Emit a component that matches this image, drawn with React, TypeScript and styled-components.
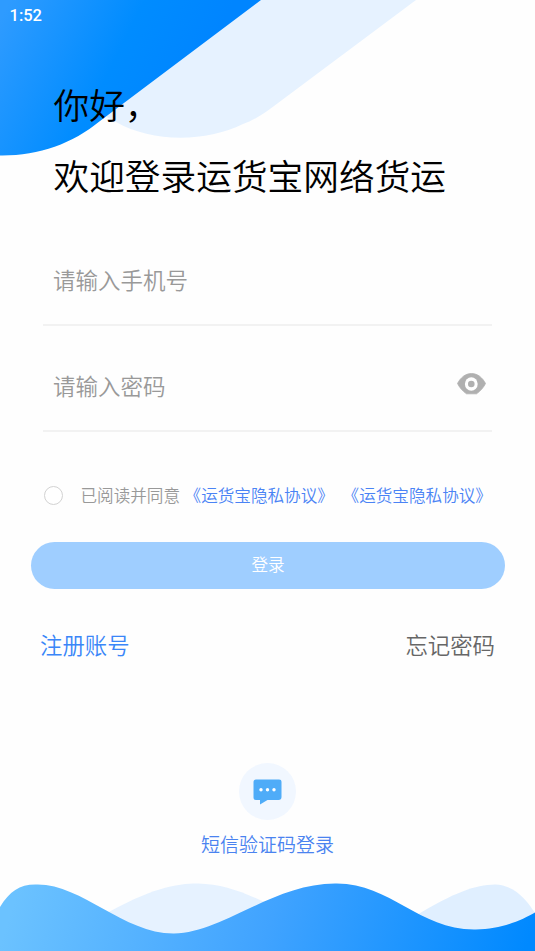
import React from "react";
import styled, { createGlobalStyle } from "styled-components";

const GlobalStyle = createGlobalStyle`
  * { box-sizing: border-box; }
  body {
    margin: 0;
    background: #fefefe;
    font-family: "Noto Sans CJK SC", sans-serif;
    font-weight: 350;
  }
`;

const Screen = styled.div`
  display: grid;
  grid-template-rows: 951px;
  grid-template-columns: 535px;
  width: 535px;
  height: 951px;
  overflow: hidden;
  background: #fefefe;
`;

const Wave = styled.svg<{ $edge: "start" | "end" }>`
  grid-area: 1 / 1;
  align-self: ${(p) => p.$edge};
  display: block;
`;

const Content = styled.main`
  grid-area: 1 / 1;
  z-index: 1;
  display: flex;
  flex-direction: column;
`;

const StatusBar = styled.div`
  height: 32px;
  padding: 0 9.5px;
  font: 500 16.5px/31px Roboto, sans-serif;
  color: #fff;
`;

const Greeting = styled.h1`
  margin: 36px 0 0 53.5px;
  font-size: 35.7px;
  font-weight: 350;
  line-height: 71px;
  color: #000;
  white-space: nowrap;
`;

const Field = styled.label<{ $height: number }>`
  display: flex;
  align-items: flex-end;
  justify-content: space-between;
  height: ${(p) => p.$height}px;
  margin: 0 43px;
  padding: 0 6.5px 28.5px 10px;
  border-bottom: 2px solid #f2f2f2;
`;

const Input = styled.input`
  width: 300px;
  height: 34px;
  padding: 0;
  border: 0;
  outline: 0;
  background: transparent;
  font: 350 22.5px/34px "Noto Sans CJK SC", sans-serif;
  color: #333;
  &::placeholder {
    color: #999;
    opacity: 1;
  }
`;

const EyeIcon = styled.svg`
  display: block;
  margin-bottom: 7px;
`;

const Agreement = styled.div`
  display: flex;
  align-items: center;
  height: 24px;
  margin: 51px 0 0 44px;
  font-size: 16.6px;
  line-height: 24px;
  color: #999;
  white-space: nowrap;
`;

const Radio = styled.span`
  width: 19px;
  height: 19px;
  margin-right: 17.5px;
  border: 1px solid #d2d2d2;
  border-radius: 50%;
  background: #fff;
`;

const Policy = styled.a<{ $gap: number }>`
  margin-left: ${(p) => p.$gap}px;
  color: #4a83f5;
`;

const LoginButton = styled.button`
  height: 47.5px;
  margin: 34.5px 30px 0 31px;
  padding: 0 0 3px;
  border: 0;
  border-radius: 24px;
  background: #9fceff;
  font: 350 16.6px/24px "Noto Sans CJK SC", sans-serif;
  color: #fff;
`;

const Links = styled.nav`
  display: flex;
  justify-content: space-between;
  margin: 38px 40px 0;
  font-size: 22.4px;
  line-height: 34px;
`;

const TextLink = styled.a<{ $color: string }>`
  color: ${(p) => p.$color};
`;

const SmsLogin = styled.a`
  display: flex;
  flex-direction: column;
  align-items: center;
  gap: 10px;
  margin-top: 102px;
  font-size: 19px;
  line-height: 28px;
  color: #4a83f0;
`;

const SmsBadge = styled.span`
  display: flex;
  align-items: center;
  justify-content: center;
  width: 57px;
  height: 57px;
  border-radius: 50%;
  background: #f1f7ff;
`;

const POLICY = "《运货宝隐私协议》";

export default function App() {
  return (
    <Screen>
      <GlobalStyle />
      <Wave $edge="start" width="535" height="160" viewBox="0 0 535 160">
        <defs>
          <linearGradient id="top" gradientUnits="userSpaceOnUse" x1="0" y1="20" x2="180" y2="110">
            <stop offset="0" stopColor="#2e9bff" />
            <stop offset="0.6" stopColor="#008cff" />
            <stop offset="1" stopColor="#0085ff" />
          </linearGradient>
        </defs>
        <path d="M416 0L274 106C262 115 252 121 243 124C205 142.500 152 142.500 116 122C70 98 45 55 36 0Z" fill="#e6f2ff" />
        <path d="M0 0H261L100 121C72 144 38 156 0 155.500Z" fill="url(#top)" />
      </Wave>
      <Wave $edge="end" width="535" height="71" viewBox="0 880 535 71">
        <defs>
          <linearGradient id="bottom" gradientUnits="userSpaceOnUse" x1="30" y1="850" x2="510" y2="1000">
            <stop offset="0" stopColor="#6bc2ff" />
            <stop offset="0.5" stopColor="#40a3ff" />
            <stop offset="1" stopColor="#0089ff" />
          </linearGradient>
        </defs>
        <path d="M100 917C150 888 176 883.500 198 883.500C225 884 248 894 275 907L230 951H100Z" fill="#e6f2ff" />
        <path d="M415 916C455 892 475 885 495 884.500C514 885 526 899 535 913V951H415Z" fill="#e0efff" />
        <path d="M0 907C10 891 20 884 37 884.500C82 884 124 934 174 933.500C222 933 274 883 336 883.500C390 883 419 929.500 474 929.500C500 930 522 920 535 912.500V951H0Z" fill="url(#bottom)" />
      </Wave>
      <Content>
        <StatusBar>1:52</StatusBar>
        <Greeting>
          你好，
          <br />
          欢迎登录运货宝网络货运
        </Greeting>
        <Field $height={116}>
          <Input type="tel" placeholder="请输入手机号" />
        </Field>
        <Field $height={106}>
          <Input type="password" placeholder="请输入密码" />
          <EyeIcon width="29" height="22" viewBox="0 0 29 22">
            <path d="M0.500 10.500C3 5.500 8 0.500 14.500 0.500S26 5.500 28.500 10.500C26.500 14.500 23.500 18 19.500 20.800H9.500C5.500 18 2.500 14.500 0.500 10.500Z" fill="#b0b0b0" stroke="#b0b0b0" strokeWidth="0.800" />
            <ellipse cx="14.300" cy="11" rx="6.400" ry="6.800" fill="#fff" />
            <circle cx="14.300" cy="11" r="3.300" fill="#b0b0b0" />
          </EyeIcon>
        </Field>
        <Agreement>
          <Radio />
          已阅读并同意
          <Policy $gap={4.5}>{POLICY}</Policy>
          <Policy $gap={8.7}>{POLICY}</Policy>
        </Agreement>
        <LoginButton>登录</LoginButton>
        <Links>
          <TextLink $color="#3a86f8">注册账号</TextLink>
          <TextLink $color="#666">忘记密码</TextLink>
        </Links>
        <SmsLogin>
          <SmsBadge>
            <svg width="29" height="26" viewBox="0 0 29 26">
              <path d="M3 0.500H26A2.500 2.500 0 0 1 28.500 3V18A3 3 0 0 1 25.500 21H14.500L7 25.500V21H3A2.500 2.500 0 0 1 0.500 18.500V3A2.500 2.500 0 0 1 3 0.500Z" fill="#4facf8" />
              <circle cx="8" cy="10.700" r="1.700" fill="#fff" />
              <circle cx="14.500" cy="10.700" r="1.700" fill="#fff" />
              <circle cx="21" cy="10.700" r="1.700" fill="#fff" />
            </svg>
          </SmsBadge>
          短信验证码登录
        </SmsLogin>
      </Content>
    </Screen>
  );
}
